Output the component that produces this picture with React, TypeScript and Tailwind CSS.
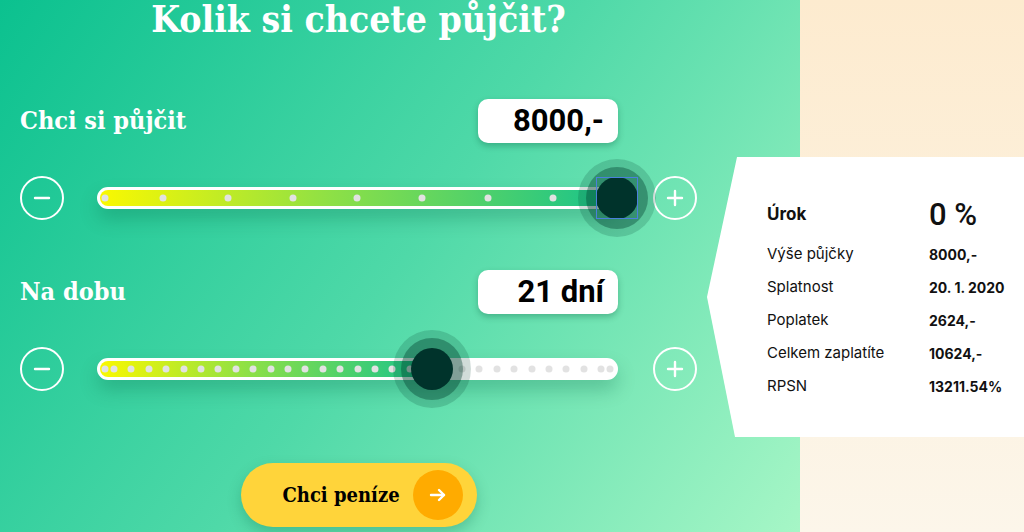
import React from "react";

const slab = { fontFamily: '"DejaVu Serif Condensed", "DejaVu Serif", serif' };

type SliderProps = {
  percent: number;
  dots: number[];
  focused?: boolean;
};

const RoundButton = ({ plus }: { plus?: boolean }) => (
  <button className="flex h-[44px] w-[44px] shrink-0 items-center justify-center rounded-full border-2 border-white">
    <svg width="20" height="20" viewBox="0 0 20 20" stroke="white" strokeWidth="2.4" strokeLinecap="round">
      <line x1="3" y1="10" x2="17" y2="10" />
      {plus && <line x1="10" y1="3" x2="10" y2="17" />}
    </svg>
  </button>
);

const Slider = ({ percent, dots, focused }: SliderProps) => (
  <div className="flex items-center">
    <RoundButton />
    <div className="relative ml-[33px] mr-[35px] h-[22px] w-[521px] rounded-full border-[3px] border-white bg-white shadow-[0_10px_18px_rgba(0,90,60,0.25)]">
      <div
        className="absolute inset-y-0 left-0 rounded-full bg-[linear-gradient(90deg,#faf800,#8de046_45%,#17c38c)]"
        style={{ width: `${percent}%` }}
      />
      {dots.map((x, i) => (
        <span
          key={i}
          className="absolute top-1/2 h-[7px] w-[7px] -translate-x-1/2 -translate-y-1/2 rounded-full bg-[#e2e2e2]"
          style={{ left: `${x - 3}px` }}
        />
      ))}
      <div
        className="absolute top-1/2 h-[42px] w-[42px] -translate-x-1/2 -translate-y-1/2"
        style={{ left: `calc(${percent}% + 2px)` }}
      >
        <div className="h-full w-full rounded-full bg-[#00332b] shadow-[0_0_0_10px_rgba(0,60,45,0.38),0_0_0_18px_rgba(0,60,45,0.18)]" />
        {focused && <div className="absolute inset-0 border border-[#4a80dc]" />}
      </div>
    </div>
    <RoundButton plus />
  </div>
);

const Field = ({ label, value }: { label: string; value: string }) => (
  <div className="mr-[79px] flex items-center justify-between">
    <span className="text-[25px] font-bold text-white" style={slab}>
      {label}
    </span>
    <div
      className="flex h-[44px] w-[140px] items-center justify-end rounded-[10px] bg-white pr-[14px] text-[31px] font-bold text-black shadow-[0_3px_6px_rgba(0,80,50,0.3)]"
      style={{ fontFamily: 'Roboto, "Liberation Sans", sans-serif' }}
    >
      {value}
    </div>
  </div>
);

const rows = [
  ["Výše půjčky", "8000,-"],
  ["Splatnost", "20. 1. 2020"],
  ["Poplatek", "2624,-"],
  ["Celkem zaplatíte", "10624,-"],
  ["RPSN", "13211.54%"],
];

const dotsA = [8, 66, 131, 196, 260, 325, 391, 456, 517];
const dotsB = [8, ...Array.from({ length: 29 }, (_, k) => 17 + k * 17.4), 513];

export default function App() {
  return (
    <div className="relative flex h-[532px] w-[1024px] overflow-hidden">
      <div className="w-[800px] bg-[linear-gradient(125deg,#0bc18f_0%,#4fd9a8_50%,#a6f6c6_100%)]">
        <div className="w-[717px] px-[20px]">
          <h1 className="mt-[-5px] text-center text-[37px] leading-[48px] font-bold text-white" style={slab}>
            Kolik si chcete půjčit?
          </h1>
          <div className="mt-[56px]">
            <Field label="Chci si půjčit" value="8000,-" />
          </div>
          <div className="mt-[33px]">
            <Slider percent={100} dots={dotsA} focused />
          </div>
          <div className="mt-[50px]">
            <Field label="Na dobu" value="21 dní" />
          </div>
          <div className="mt-[33px]">
            <Slider percent={64} dots={dotsB} />
          </div>
          <div className="mt-[72px] flex justify-center">
            <button className="flex h-[64px] w-[236px] items-center justify-between rounded-full bg-[#ffd43a] pl-[42px] pr-[14px] shadow-[0_6px_14px_rgba(0,90,60,0.25)]">
              <span className="text-[20px] font-bold text-black" style={slab}>
                Chci peníze
              </span>
              <span className="flex h-[50px] w-[50px] items-center justify-center rounded-full bg-[#ffab00]">
                <svg width="18" height="18" viewBox="0 0 18 18" fill="none" stroke="white" strokeWidth="2.4" strokeLinecap="round" strokeLinejoin="round">
                  <line x1="2" y1="9" x2="15" y2="9" />
                  <polyline points="10,4 15,9 10,14" />
                </svg>
              </span>
            </button>
          </div>
        </div>
      </div>
      <div className="flex-1 bg-[linear-gradient(180deg,#fdebcf,#fcf6ea)]" />

      <aside
        className="absolute left-[707px] top-[157px] h-[280px] w-[317px] bg-white pl-[60px] pt-[43px] text-[#111]"
        style={{ fontFamily: 'Inter, "Noto Sans", sans-serif', clipPath: "polygon(30px 0, 100% 0, 100% 100%, 28px 100%, 0 50%)" }}
      >
        <div className="flex h-[30px] items-center">
          <span className="w-[162px] text-[17px] font-bold">Úrok</span>
          <span className="text-[31px] font-medium" style={{ fontFamily: 'Roboto, "Liberation Sans", sans-serif' }}>
            0 %
          </span>
        </div>
        <div className="mt-[8px] flex flex-col">
          {rows.map(([l, v]) => (
            <div key={l} className="flex h-[33px] items-center">
              <span className="w-[162px] text-[15px]">{l}</span>
              <span className="text-[14px] font-bold">{v}</span>
            </div>
          ))}
        </div>
      </aside>
    </div>
  );
}
